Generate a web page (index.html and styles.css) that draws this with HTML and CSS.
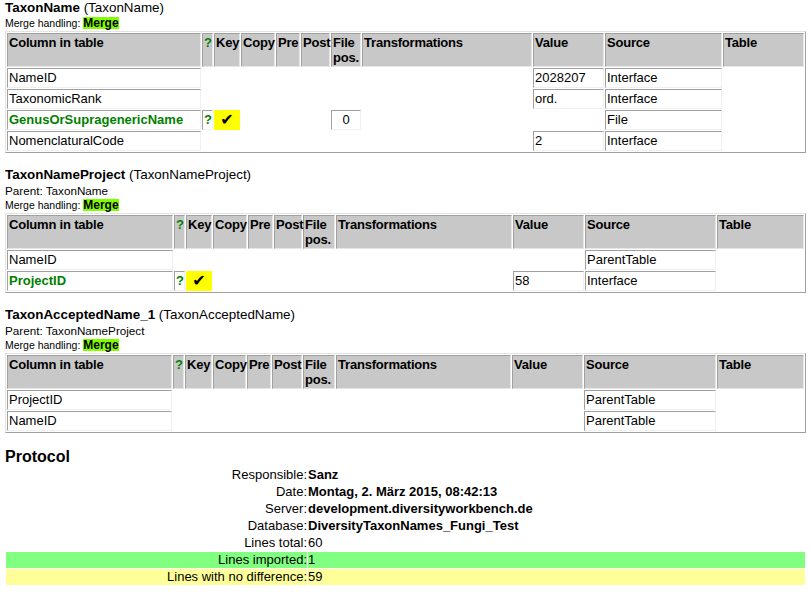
FILE: index.html
```html
<!DOCTYPE html>
<html>
<head>
<meta charset="utf-8">
<title>Import</title>
<link rel="stylesheet" href="styles.css">
</head>
<body>
<section class="block">
  <div class="title"><b>TaxonName</b> (TaxonName)</div>
  <div class="merge">Merge handling: <span class="merge-tag">Merge</span></div>
  <table class="map t1">
    <tr><th>Column in table</th><th class="q">?</th><th>Key</th><th>Copy</th><th>Pre</th><th>Post</th><th>File<br>pos.</th><th>Transformations</th><th>Value</th><th>Source</th><th>Table</th></tr>
    <tr><td>NameID</td><td></td><td></td><td></td><td></td><td></td><td></td><td></td><td>2028207</td><td>Interface</td><td></td></tr>
    <tr><td>TaxonomicRank</td><td></td><td></td><td></td><td></td><td></td><td></td><td></td><td>ord.</td><td>Interface</td><td></td></tr>
    <tr><td class="key-col">GenusOrSupragenericName</td><td class="q">?</td><td class="check">✔</td><td></td><td></td><td></td><td class="num">0</td><td></td><td></td><td>File</td><td></td></tr>
    <tr><td>NomenclaturalCode</td><td></td><td></td><td></td><td></td><td></td><td></td><td></td><td>2</td><td>Interface</td><td></td></tr>
  </table>
</section>

<section class="block">
  <div class="title"><b>TaxonNameProject</b> (TaxonNameProject)</div>
  <div class="parent">Parent: TaxonName</div>
  <div class="merge">Merge handling: <span class="merge-tag">Merge</span></div>
  <table class="map t2">
    <tr><th>Column in table</th><th class="q">?</th><th>Key</th><th>Copy</th><th>Pre</th><th>Post</th><th>File<br>pos.</th><th>Transformations</th><th>Value</th><th>Source</th><th>Table</th></tr>
    <tr><td>NameID</td><td></td><td></td><td></td><td></td><td></td><td></td><td></td><td></td><td>ParentTable</td><td></td></tr>
    <tr><td class="key-col">ProjectID</td><td class="q">?</td><td class="check">✔</td><td></td><td></td><td></td><td></td><td></td><td>58</td><td>Interface</td><td></td></tr>
  </table>
</section>

<section class="block">
  <div class="title"><b>TaxonAcceptedName_1</b> (TaxonAcceptedName)</div>
  <div class="parent">Parent: TaxonNameProject</div>
  <div class="merge">Merge handling: <span class="merge-tag">Merge</span></div>
  <table class="map t3">
    <tr><th>Column in table</th><th class="q">?</th><th>Key</th><th>Copy</th><th>Pre</th><th>Post</th><th>File<br>pos.</th><th>Transformations</th><th>Value</th><th>Source</th><th>Table</th></tr>
    <tr><td>ProjectID</td><td></td><td></td><td></td><td></td><td></td><td></td><td></td><td></td><td>ParentTable</td><td></td></tr>
    <tr><td>NameID</td><td></td><td></td><td></td><td></td><td></td><td></td><td></td><td></td><td>ParentTable</td><td></td></tr>
  </table>
</section>

<section class="protocol">
  <h2 class="protocol-title">Protocol</h2>
  <table class="proto">
    <tr><td class="lbl">Responsible:</td><td class="val strong">Sanz</td></tr>
    <tr><td class="lbl">Date:</td><td class="val strong">Montag, 2. März 2015, 08:42:13</td></tr>
    <tr><td class="lbl">Server:</td><td class="val strong">development.diversityworkbench.de</td></tr>
    <tr><td class="lbl">Database:</td><td class="val strong">DiversityTaxonNames_Fungi_Test</td></tr>
    <tr><td class="lbl">Lines total:</td><td class="val">60</td></tr>
    <tr class="ok"><td class="lbl">Lines imported:</td><td class="val">1</td></tr>
    <tr class="same"><td class="lbl">Lines with no difference:</td><td class="val">59</td></tr>
  </table>
</section>
</body>
</html>
```

FILE: styles.css
```css
html, body {
  margin: 0;
  padding: 0;
  background: #ffffff;
}
body {
  padding-left: 5px;
  font-family: "Liberation Sans", Arial, sans-serif;
  font-size: 13px;
  color: #000000;
}

.block + .block {
  margin-top: 14px;
}

.title {
  font-size: 13.4px;
  line-height: 16px;
}
.parent {
  font-size: 11.7px;
  line-height: 15px;
}
.merge {
  font-size: 10.5px;
  line-height: 15px;
}
.merge-tag {
  display: inline-block;
  font-size: 12px;
  line-height: 12px;
  font-weight: bold;
  background: #80ff00;
}

.map {
  table-layout: fixed;
  width: 801px;
  border-collapse: separate;
  border-spacing: 1px;
  empty-cells: hide;
  border: 1px solid;
  border-color: #e3e3e3 #a0a0a0 #a0a0a0 #e3e3e3;
}
.map th, .map td {
  box-sizing: border-box;
  padding: 1px;
  border: 1px solid;
  border-color: #a0a0a0 #f0f0f0 #f0f0f0 #a0a0a0;
  text-align: left;
  vertical-align: top;
  white-space: nowrap;
}
.map th {
  background: #c8c8c8;
  font-weight: bold;
  line-height: 15px;
  letter-spacing: -0.2px;
  border-color: #a0a0a0 #e6e6e6 #e6e6e6 #a0a0a0;
}
.map td {
  line-height: 16px;
}
.map .q {
  color: #008000;
  font-weight: bold;
}
.map .key-col {
  color: #008000;
  font-weight: bold;
}
.map td.check {
  background: #ffff00;
  border-color: #ffff00;
  text-align: center;
  font-family: "DejaVu Sans", sans-serif;
  font-size: 16px;
}
.map td.num {
  text-align: center;
}

.t1 th:nth-child(1) { width: 194px; }
.t1 th:nth-child(2) { width: 11px; }
.t1 th:nth-child(3) { width: 26px; }
.t1 th:nth-child(4) { width: 34px; }
.t1 th:nth-child(5) { width: 24px; }
.t1 th:nth-child(6) { width: 29px; }
.t1 th:nth-child(7) { width: 30px; }
.t1 th:nth-child(8) { width: 170px; }
.t1 th:nth-child(9) { width: 71px; }
.t1 th:nth-child(10) { width: 117px; }
.t1 th:nth-child(11) { width: 81px; }

.t2 th:nth-child(1) { width: 166px; }
.t2 th:nth-child(2) { width: 11px; }
.t2 th:nth-child(3) { width: 26px; }
.t2 th:nth-child(4) { width: 34px; }
.t2 th:nth-child(5) { width: 25px; }
.t2 th:nth-child(6) { width: 28px; }
.t2 th:nth-child(7) { width: 32px; }
.t2 th:nth-child(8) { width: 176px; }
.t2 th:nth-child(9) { width: 71px; }
.t2 th:nth-child(10) { width: 131px; }
.t2 th:nth-child(11) { width: 87px; }

.t3 th:nth-child(1) { width: 165px; }
.t3 th:nth-child(2) { width: 11px; }
.t3 th:nth-child(3) { width: 27px; }
.t3 th:nth-child(4) { width: 33px; }
.t3 th:nth-child(5) { width: 24px; }
.t3 th:nth-child(6) { width: 30px; }
.t3 th:nth-child(7) { width: 32px; }
.t3 th:nth-child(8) { width: 175px; }
.t3 th:nth-child(9) { width: 71px; }
.t3 th:nth-child(10) { width: 132px; }
.t3 th:nth-child(11) { width: 87px; }

.protocol {
  margin-top: 14px;
}
.protocol-title {
  margin: 0;
  font-size: 16px;
  line-height: 19px;
  font-weight: bold;
}
.proto {
  table-layout: fixed;
  width: 801px;
  border-collapse: separate;
  border-spacing: 1px;
}
.proto td {
  padding: 0;
  line-height: 16px;
  white-space: nowrap;
}
.proto td.lbl {
  width: 301px;
  text-align: right;
}
.proto td.val {
  text-align: left;
}
.proto td.strong {
  font-weight: bold;
}
.proto tr.ok td {
  background: #80ff80;
}
.proto tr.same td {
  background: #ffff99;
}
```
